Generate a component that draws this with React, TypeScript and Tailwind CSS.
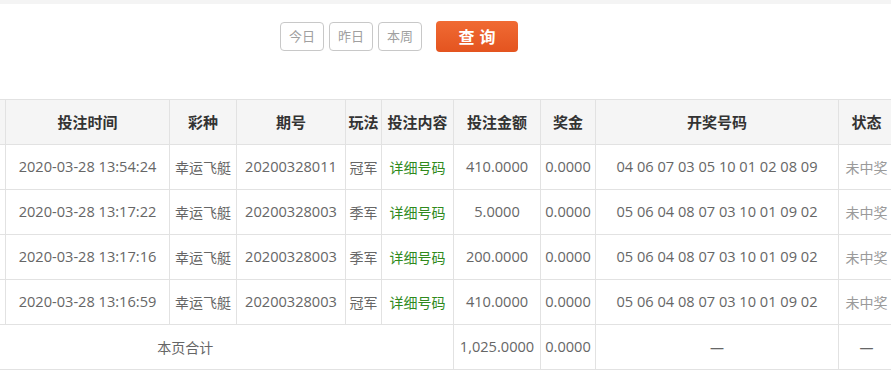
import { FC } from "react";

type Row = {
  time: string;
  lottery: string;
  issue: string;
  play: string;
  amount: string;
  prize: string;
  numbers: string;
};

const rows: Row[] = [
  { time: "2020-03-28 13:54:24", lottery: "幸运飞艇", issue: "20200328011", play: "冠军", amount: "410.0000", prize: "0.0000", numbers: "04 06 07 03 05 10 01 02 08 09" },
  { time: "2020-03-28 13:17:22", lottery: "幸运飞艇", issue: "20200328003", play: "季军", amount: "5.0000", prize: "0.0000", numbers: "05 06 04 08 07 03 10 01 09 02" },
  { time: "2020-03-28 13:17:16", lottery: "幸运飞艇", issue: "20200328003", play: "季军", amount: "200.0000", prize: "0.0000", numbers: "05 06 04 08 07 03 10 01 09 02" },
  { time: "2020-03-28 13:16:59", lottery: "幸运飞艇", issue: "20200328003", play: "冠军", amount: "410.0000", prize: "0.0000", numbers: "05 06 04 08 07 03 10 01 09 02" },
];

const headers = ["", "投注时间", "彩种", "期号", "玩法", "投注内容", "投注金额", "奖金", "开奖号码", "状态"];
const widths = [88, 164, 67, 109, 36, 72, 87, 55, 243, 56];

const cell = "border border-[#e2e2e2] h-[45px] text-center whitespace-nowrap p-0";
const num = "text-[14.6px]";

const QuickBtn: FC<{ label: string }> = ({ label }) => (
  <button className="w-[44px] h-[29px] border border-[#c8c8c8] rounded-[4px] text-[13px] text-[#a0a0a0] bg-white">
    {label}
  </button>
);

const App: FC = () => {
  return (
    <div
      className="w-[891px] h-[377px] bg-white overflow-hidden relative"
      style={{ fontFamily: '"Open Sans", "Noto Sans CJK SC", sans-serif' }}
    >
      <div className="h-[4px] bg-[#f4f4f4]" />
      <div className="flex items-center pl-[280px] pt-[15px] h-[50px]">
        <div className="flex gap-[5px]">
          <QuickBtn label="今日" />
          <QuickBtn label="昨日" />
          <QuickBtn label="本周" />
        </div>
        <button className="ml-[14px] w-[82px] h-[31px] rounded-[4px] bg-gradient-to-b from-[#f06a33] to-[#e4541f] text-white text-[16px] font-bold tracking-[5px] pl-[5px]">
          查询
        </button>
      </div>
      <table className="table-fixed border-collapse ml-[-83px] mt-[45px] text-[14px] text-[#666]" style={{ width: 977 }}>
        <colgroup>
          {widths.map((w, i) => (
            <col key={i} style={{ width: w }} />
          ))}
        </colgroup>
        <thead>
          <tr className="bg-[#f5f5f5]">
            {headers.map((h, i) => (
              <th key={i} className={`${cell} text-[15px] font-bold text-[#333]`}>
                {h}
              </th>
            ))}
          </tr>
        </thead>
        <tbody>
          {rows.map((r, i) => (
            <tr key={i}>
              <td className={cell}></td>
              <td className={`${cell} ${num}`}>{r.time}</td>
              <td className={cell}>{r.lottery}</td>
              <td className={`${cell} ${num}`}>{r.issue}</td>
              <td className={cell}>{r.play}</td>
              <td className={`${cell} text-[#2f8a1c]`}>详细号码</td>
              <td className={`${cell} ${num}`}>{r.amount}</td>
              <td className={`${cell} ${num}`}>{r.prize}</td>
              <td className={`${cell} ${num}`}>{r.numbers}</td>
              <td className={`${cell} text-[#9a9a9a]`}>未中奖</td>
            </tr>
          ))}
          <tr>
            <td colSpan={6} className={`${cell} border-l-0`}>
              本页合计
            </td>
            <td className={`${cell} ${num}`}>1,025.0000</td>
            <td className={`${cell} ${num}`}>0.0000</td>
            <td className={cell}>—</td>
            <td className={cell}>—</td>
          </tr>
        </tbody>
      </table>
    </div>
  );
};

export default App;
